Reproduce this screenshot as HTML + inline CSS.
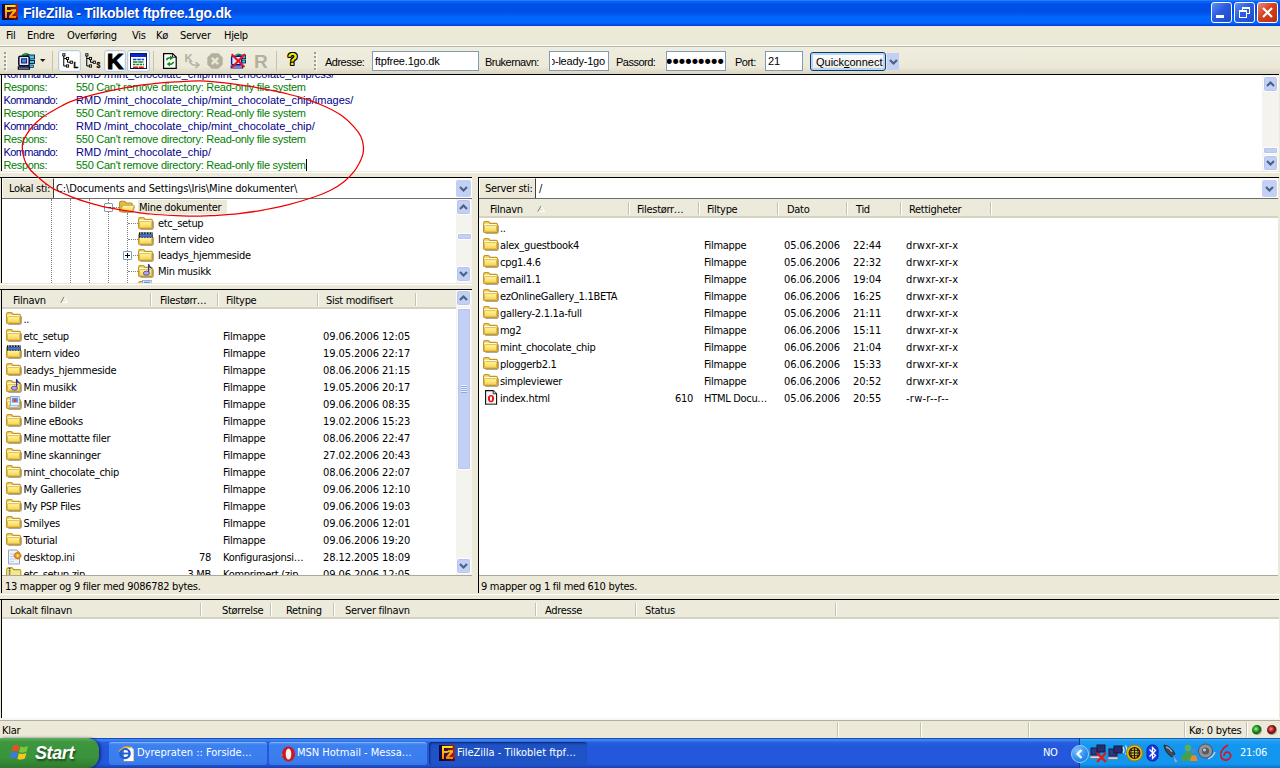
<!DOCTYPE html><html><head><meta charset='utf-8'><title>FileZilla - Tilkoblet ftpfree.1go.dk</title><style>
*{box-sizing:border-box;margin:0;padding:0}
html,body{width:1280px;height:768px;overflow:hidden;background:#ECE9D8}
body{position:relative;font-family:'DejaVu Sans Condensed','DejaVu Sans','Liberation Sans',sans-serif;font-size:11px;letter-spacing:-0.3px;color:#000;line-height:13px}
.a{position:absolute}
.t{position:absolute;white-space:nowrap;height:13px;line-height:13px}
.ms{font-family:'Liberation Sans',sans-serif;letter-spacing:-0.35px}
.w{background:#fff}
.bk{background:#000}
.hd{background:#EBEADB}
.sep{position:absolute;width:1px;background:#C5C2B2;box-shadow:1px 0 0 #fff}
.sb{position:absolute;width:17px;background:#F4F3EE}
.sbb{position:absolute;left:1px;width:15px;height:16px;background:#C3D0F6;border:1px solid #fff;border-radius:3px;box-shadow:0 0 0 1px #B7C5EE inset}
.inp{position:absolute;background:#fff;border:1px solid #7F9DB9;height:20px}
.ic{position:absolute;width:16px;height:16px}
</style></head><body>
<svg width="0" height="0" style="position:absolute">
<defs>
<linearGradient id="gf" x1="0" y1="0" x2="0" y2="1"><stop offset="0" stop-color="#FFF89C"/><stop offset="1" stop-color="#F6D052"/></linearGradient>
<symbol id="fold" viewBox="0 0 16 16">
<path d="M2.4 13.3 H14 Q15.3 13.3 15.3 12 V5.4" fill="none" stroke="#6C6850" stroke-width="1" opacity=".7"/>
<path d="M0.6 3.4 Q0.6 1.6 2.2 1.6 L5 1.6 Q6.3 1.6 6.9 3.4 L13.2 3.4 Q14.4 3.5 14.4 4.8 L14.4 11.4 Q14.4 12.5 13.2 12.5 L1.8 12.5 Q0.6 12.5 0.6 11.4 Z" fill="#F6DC74" stroke="#C49624" stroke-width="1.15"/>
<path d="M1.4 4 H13.4 V5.6 H1.4 Z" fill="#FFFBE2"/>
<path d="M1.5 6.6 Q1.5 5.6 2.4 5.6 L12.7 5.6 Q13.6 5.6 13.6 6.6 L13.6 11 Q13.6 11.9 12.7 11.9 L2.4 11.9 Q1.5 11.9 1.5 11 Z" fill="url(#gf)" stroke="#D4A838" stroke-width=".7"/>
</symbol>
<symbol id="foldo" viewBox="0 0 16 16">
<path d="M3 12.4 H13.6 L15.6 7" fill="none" stroke="#6C6850" stroke-width="1" opacity=".6"/>
<path d="M0.6 3 Q0.6 1.2 2.2 1.2 L5 1.2 Q6.3 1.2 6.9 3 L12 3 Q13.2 3.1 13.2 4.4 L13.2 10.6 L1.8 11.6 Q0.6 11.6 0.6 10.5 Z" fill="#E4BC4C" stroke="#B88C1E" stroke-width="1.1"/>
<path d="M3.4 5.6 L15.4 5.6 L13.3 11.6 L1.2 11.6 Z" fill="url(#gf)" stroke="#C49624" stroke-width=".9"/>
<path d="M4 6.3 H14.4" stroke="#FFFBE2" stroke-width=".8"/>
</symbol>
<symbol id="vid" viewBox="0 0 16 16">
<use href="#fold"/>
<rect x="1" y="0.3" width="13.6" height="5.4" fill="#101010"/>
<rect x="1.6" y="2.2" width="12.4" height="2.6" fill="#3C78E0"/>
<path d="M2 1.1 H14" stroke="#fff" stroke-width="1" stroke-dasharray="1.4 1.4"/>
<path d="M2 5.9 H14" stroke="#fff" stroke-width=".9" stroke-dasharray="1.4 1.4"/>
</symbol>
<symbol id="mus" viewBox="0 0 16 16">
<use href="#fold"/>
<path d="M10.6 0 L10.6 8.6" stroke="#30308C" stroke-width="1.3"/><path d="M10.6 0 L14 4.4 L13.2 5 L10.6 2.2 Z" fill="#30308C"/>
<ellipse cx="8.4" cy="9.2" rx="3" ry="2" fill="#A8A8F0" stroke="#4848B0" stroke-width=".9"/>
</symbol>
<symbol id="pic" viewBox="0 0 16 16">
<use href="#fold"/>
<rect x="4.6" y="0.4" width="8.6" height="9.6" fill="#F4F8FF" stroke="#8098C8" stroke-width=".8"/>
<rect x="5.8" y="1.6" width="6.2" height="5" fill="#58A0E8"/><circle cx="9" cy="4.4" r="1.6" fill="#E84030"/>
<rect x="3.6" y="9.2" width="8" height="2.4" fill="#D8E4F8" stroke="#8098C8" stroke-width=".5"/>
</symbol>
<symbol id="ini" viewBox="0 0 16 16">
<path d="M2.5 1 H11 L13.5 3.5 V15 H2.5 Z" fill="#EEF2FC" stroke="#9098B8" stroke-width=".9"/>
<path d="M4 5 H10 M4 7.5 H9 M4 10 H10 M4 12.5 H8" stroke="#B8C8E8" stroke-width=".9"/>
<circle cx="11.6" cy="6.6" r="3.1" fill="#F0A020" stroke="#B86800" stroke-width=".9"/><circle cx="11.6" cy="6.6" r="1.1" fill="#FFF0C0"/>
<path d="M11.6 2.6 V4 M11.6 9.2 V10.6 M7.6 6.6 H9 M14.2 6.6 H15.6" stroke="#D88810" stroke-width="1.6"/>
</symbol>
<symbol id="zip" viewBox="0 0 16 16">
<path d="M0.6 4.2 Q0.6 2.1 2.4 1.6 L5.6 1.6 Q6.8 1.8 7.4 3.6 L13.6 3.6 Q14.8 3.8 14.8 5 L14.8 14.5 L0.6 14.5 Z" fill="#F6E888" stroke="#B0A020" stroke-width="1.1"/>
<path d="M3.6 2 V14" stroke="#303030" stroke-width="1.6" stroke-dasharray="1.2 1"/>
</symbol>
<symbol id="html" viewBox="0 0 16 16">
<path d="M2.6 0.6 H10.2 L13.6 3.8 V14.2 H2.6 Z" fill="#F6F6F6" stroke="#101010" stroke-width="1.1"/>
<path d="M10.2 0.6 V3.8 H13.6" fill="#C8C8C8" stroke="#101010" stroke-width=".8"/>
<ellipse cx="8" cy="8.6" rx="3.1" ry="3.6" fill="#E81010"/><ellipse cx="8" cy="8.6" rx="1.1" ry="2.4" fill="#fff"/>
<path d="M3.6 14 H12.6" stroke="#909090" stroke-width=".8"/>
</symbol>
<symbol id="arrd" viewBox="0 0 15 16"><path d="M4 6 L7.5 9.5 L11 6" fill="none" stroke="#4D6185" stroke-width="2.2"/></symbol>
<symbol id="arru" viewBox="0 0 15 16"><path d="M4 10 L7.5 6.5 L11 10" fill="none" stroke="#4D6185" stroke-width="2.2"/></symbol>
</defs></svg>
<div class='a' style='left:0;top:0;width:1280px;height:26px;background:linear-gradient(#4A8CFF 0,#0A64FA 1px,#0062F8 2.5px,#0050E8 4px,#004EE6 12px,#005CF4 15px,#0066FF 17px,#0066FF 23px,#0050E8 24.5px,#0038D0 26px)'></div>
<svg class='a' style='left:2px;top:4px' width='16' height='16' viewBox='0 0 16 16'><defs><linearGradient id='fzb' x1='0' y1='0' x2='1' y2='0'><stop offset='0' stop-color='#10004A'/><stop offset='.45' stop-color='#3A1050'/><stop offset='1' stop-color='#B02418'/></linearGradient><linearGradient id='fzy' x1='0' y1='0' x2='0' y2='1'><stop offset='0' stop-color='#FFF000'/><stop offset='1' stop-color='#FF7A00'/></linearGradient></defs>
<rect width='16' height='16' fill='url(#fzb)'/><rect x='0' y='13' width='16' height='3' fill='#200008' opacity='.55'/>
<path d='M3 1 H13.6 V3 H5 V6 H9 L9 5.3 H14 V7.3 L10 12 H14 V14 H7 V12 L11 7.3 H8.6 V8 H5 V14 H3 Z' fill='url(#fzy)'/></svg>
<div class='t' style="left:23px;top:5px;height:18px;line-height:18px;font:bold 14px 'Liberation Sans',sans-serif;letter-spacing:-0.28px;color:#fff;text-shadow:1px 1px 0 #0A30A0">FileZilla - Tilkoblet ftpfree.1go.dk</div>
<div class='a' style='left:1211px;top:2px;width:21px;height:21px;border:1px solid #fff;border-radius:3px;background:linear-gradient(135deg,#5F8FF5,#2A5CE0 45%,#1F4AC8)'><div class='a' style='left:4px;top:12px;width:8px;height:3px;background:#fff'></div></div>
<div class='a' style='left:1234px;top:2px;width:21px;height:21px;border:1px solid #fff;border-radius:3px;background:linear-gradient(135deg,#5F8FF5,#2A5CE0 45%,#1F4AC8)'><div class='a' style='left:7px;top:4px;width:8px;height:7px;border:1px solid #fff;border-top-width:2px'></div><div class='a' style='left:4px;top:7px;width:8px;height:8px;border:1px solid #fff;border-top-width:2px;background:#2A5CE0'></div></div>
<div class='a' style='left:1257px;top:2px;width:21px;height:21px;border:1px solid #fff;border-radius:3px;background:linear-gradient(135deg,#E9897A,#D4401F 45%,#B8300F)'><svg class='a' style='left:0;top:0' width='19' height='19'><path d='M5 5 L14 14 M14 5 L5 14' stroke='#fff' stroke-width='2.2'/></svg></div>
<div class='a' style='left:0;top:26px;width:1280px;height:19px;background:#ECE9D8'></div>
<div class='t' style='left:6px;top:29px'>Fil</div>
<div class='t' style='left:27px;top:29px'>Endre</div>
<div class='t' style='left:67px;top:29px'>Overføring</div>
<div class='t' style='left:132px;top:29px'>Vis</div>
<div class='t' style='left:156px;top:29px'>Kø</div>
<div class='t' style='left:180px;top:29px'>Server</div>
<div class='t' style='left:224px;top:29px'>Hjelp</div>
<div class='a' style='left:0;top:45px;width:1280px;height:1px;background:#fff'></div>
<div class='a' style='left:0;top:46px;width:1280px;height:1px;background:#B8B5A2'></div>
<div class='a' style='left:0;top:47px;width:1280px;height:27px;background:linear-gradient(#EFEDDE 0,#ECE9D8 20px,#D8D4C0 27px)'></div>
<div class='a' style='left:4px;top:52px;width:2px;height:18px;background:repeating-linear-gradient(#A09C88 0,#A09C88 2px,transparent 2px,transparent 4px);box-shadow:1px 1px 0 rgba(255,255,255,.7)'></div>
<div class='a' style='left:314px;top:52px;width:2px;height:18px;background:repeating-linear-gradient(#A09C88 0,#A09C88 2px,transparent 2px,transparent 4px);box-shadow:1px 1px 0 rgba(255,255,255,.7)'></div>
<div class='a' style='left:52px;top:51px;width:1px;height:20px;background:#C5C2B2'></div>
<div class='a' style='left:153px;top:51px;width:1px;height:20px;background:#C5C2B2'></div>
<div class='a' style='left:276px;top:51px;width:1px;height:20px;background:#C5C2B2'></div>
<svg class='a' style='left:17px;top:52px' width='30' height='18' viewBox='0 0 30 18'>
<path d='M5 3 Q8 0 12.5 2.5 L9.5 4.5 Z' fill='#30B030' stroke='#108010' stroke-width='.8'/>
<rect x='10' y='3' width='7.5' height='4' fill='#30D0E8' stroke='#101040' stroke-width='.9'/><rect x='11.5' y='8.5' width='6' height='3' fill='#30D0E8' stroke='#101040' stroke-width='.9'/><rect x='11.5' y='13' width='5' height='2.4' fill='#30D0E8' stroke='#101040' stroke-width='.7'/>
<rect x='1.8' y='4.2' width='10.4' height='9.6' rx='1.6' fill='#E0E8F8' stroke='#080830' stroke-width='1.5'/><rect x='4.6' y='6.8' width='5' height='4.2' fill='#4888E0' stroke='#101050' stroke-width='.9'/>
<path d='M1.4 15 H12.4 V17.2 H1.4 Z' fill='#F0F0F8' stroke='#080820' stroke-width='1.3'/><path d='M3 16.1 H11' stroke='#2040A0' stroke-width='.9' stroke-dasharray='1.2 1'/>
<path d='M23 7 H28.4 L25.7 10 Z' fill='#181818'/></svg>
<div class='a' style='left:58px;top:50px;width:23px;height:22px;background:#fff;border:1px solid #B8CCE0;border-radius:3px;box-shadow:0 0 0 1px #F0F4FA inset'></div>
<div class='a' style='left:104px;top:50px;width:22px;height:22px;background:#fff;border:1px solid #B8CCE0;border-radius:3px;box-shadow:0 0 0 1px #F0F4FA inset'></div>
<div class='a' style='left:127px;top:50px;width:23px;height:22px;background:#fff;border:1px solid #B8CCE0;border-radius:3px;box-shadow:0 0 0 1px #F0F4FA inset'></div>
<svg class='a' style='left:62px;top:53px' width='18' height='17' viewBox='0 0 18 17'><path d='M1.75 3 V13 H4.2 M1.75 5.5 H4.2 M5.5 6.8 V9.25 H8' fill='none' stroke='#000' stroke-width='1'/>
<rect x='.75' y='.75' width='2.2' height='2.2' fill='#fff' stroke='#000' stroke-width='.9'/><rect x='4.4' y='4.4' width='2.2' height='2.2' fill='#fff' stroke='#000' stroke-width='.9'/><rect x='8.2' y='8.1' width='2.2' height='2.2' fill='#fff' stroke='#000' stroke-width='.9'/><rect x='4.4' y='11.9' width='2.2' height='2.2' fill='#fff' stroke='#000' stroke-width='.9'/>
<text x='11.5' y='15.3' font-family="Liberation Sans,sans-serif" font-weight='bold' font-size='9' fill='#000' stroke='#000' stroke-width='.5' textLength='4.4' lengthAdjust='spacingAndGlyphs'>L</text></svg>
<svg class='a' style='left:84.5px;top:53px' width='18' height='17' viewBox='0 0 18 17'><path d='M1.75 3 V13 H4.2 M1.75 5.5 H4.2 M5.5 6.8 V9.25 H8' fill='none' stroke='#000' stroke-width='1'/>
<rect x='.75' y='.75' width='2.2' height='2.2' fill='#fff' stroke='#000' stroke-width='.9'/><rect x='4.4' y='4.4' width='2.2' height='2.2' fill='#fff' stroke='#000' stroke-width='.9'/><rect x='8.2' y='8.1' width='2.2' height='2.2' fill='#fff' stroke='#000' stroke-width='.9'/><rect x='4.4' y='11.9' width='2.2' height='2.2' fill='#fff' stroke='#000' stroke-width='.9'/>
<text x='11.5' y='15.3' font-family="Liberation Sans,sans-serif" font-weight='bold' font-size='9' fill='#000' stroke='#000' stroke-width='.5' textLength='3.6' lengthAdjust='spacingAndGlyphs'>S</text></svg>
<div class='t' style="left:107px;top:49px;height:24px;line-height:24px;font:bold 22.5px 'Liberation Sans',sans-serif;letter-spacing:0;-webkit-text-stroke:1.1px #000">K</div>
<svg class='a' style='left:130px;top:53px' width='17' height='16' viewBox='0 0 17 16'><rect x='.5' y='.5' width='16' height='15' fill='#fff' stroke='#181848'/><rect x='1' y='1' width='15' height='3' fill='#0828D0'/>
<path d='M3 6.4 H14' stroke='#1838E8' stroke-width='1.5' stroke-dasharray='3.5 .8'/><path d='M3 9 H14' stroke='#088818' stroke-width='1.5' stroke-dasharray='4.5 .8'/><path d='M3 11.6 H14' stroke='#088818' stroke-width='1.5' stroke-dasharray='2.5 .8'/><path d='M3 14.2 H14' stroke='#E81818' stroke-width='1.5' stroke-dasharray='5 .8'/></svg>
<svg class='a' style='left:163px;top:53px' width='14' height='16' viewBox='0 0 14 16'><path d='M.6 .6 H9.6 L13.2 4 V15.4 H.6 Z' fill='#fff' stroke='#000' stroke-width='1.2'/><path d='M9.4 .8 V4.2 H13' fill='none' stroke='#000' stroke-width='.9'/>
<path d='M3.6 7.2 Q3.8 4.6 7.4 4.8' fill='none' stroke='#109010' stroke-width='1.5'/><path d='M7 2.6 L10.4 4.9 L7 7.2 Z' fill='#109010'/><path d='M10.4 8.8 Q10.2 11.4 6.6 11.2' fill='none' stroke='#109010' stroke-width='1.5'/><path d='M7 8.8 L3.6 11.1 L7 13.4 Z' fill='#109010'/></svg>
<div class='t' style="left:184.5px;top:52px;height:11px;line-height:11px;font:bold 11.5px 'Liberation Sans',sans-serif;color:#B4B09E;letter-spacing:0">K</div>
<svg class='a' style='left:186px;top:58px' width='16' height='12'><path d='M3.5 3 Q5 8 12 7 M9.6 4 L13 7 L9.6 10' fill='none' stroke='#B4B09E' stroke-width='1.5'/></svg>
<svg class='a' style='left:207px;top:53px' width='16' height='16'><path d='M4.6 .3 H11.4 L15.7 4.6 V11.4 L11.4 15.7 H4.6 L.3 11.4 V4.6 Z' fill='#B4B09E'/><path d='M4.8 4.8 L11.2 11.2 M11.2 4.8 L4.8 11.2' stroke='#E8E5D4' stroke-width='2.6'/></svg>
<svg class='a' style='left:230px;top:53px' width='17' height='16' viewBox='0 0 17 16'><path d='M5 2 Q8 -.5 11 1.5 L9 3.5 Z' fill='#30B030'/><rect x='8.6' y='2' width='7' height='3.6' fill='#30D0E8' stroke='#101040' stroke-width='.8'/><rect x='9.6' y='7' width='6' height='3' fill='#30D0E8' stroke='#101040' stroke-width='.8'/><rect x='1.6' y='3.2' width='10' height='8.6' rx='1.4' fill='#D8E4F8' stroke='#0818A0' stroke-width='1.4'/><path d='M1.2 13 H12.6 V15 H1.2 Z' fill='#E8E8F0' stroke='#0818A0' stroke-width='1.2'/>
<path d='M1.6 1.2 L14.4 14 M14.8 1.2 L2 14.4' stroke='#F01010' stroke-width='2'/></svg>
<div class='t' style="left:254px;top:51px;height:20px;line-height:20px;font:bold 19px 'Liberation Sans',sans-serif;color:#B4B09E;letter-spacing:0">R</div>
<div class='t' style="left:287.5px;top:50px;height:20px;line-height:20px;font:bold 16.5px 'Liberation Sans',sans-serif;color:#F8EC00;letter-spacing:0;text-shadow:1px 0 0 #000,-1px 0 0 #000,0 1px 0 #000,0 -1px 0 #000,1px 1px 0 #000,-1px -1px 0 #000,1px -1px 0 #000,-1px 1px 0 #000">?</div>
<div class='t ms' style='left:325px;top:56px;letter-spacing:-0.5px'>Adresse:</div>
<div class='t ms' style='left:485px;top:56px;letter-spacing:-0.5px'>Brukernavn:</div>
<div class='t ms' style='left:616px;top:56px;letter-spacing:-0.5px'>Passord:</div>
<div class='t ms' style='left:735px;top:56px;letter-spacing:-0.5px'>Port:</div>
<div class='inp' style='left:372px;top:51px;width:107px;overflow:hidden'><div class='t ms' style='left:2px;top:3px;letter-spacing:-0.2px'>ftpfree.1go.dk</div></div>
<div class='inp' style='left:549px;top:51px;width:60px;overflow:hidden'><div class='a' style='left:2px;top:0;width:56px;height:18px;overflow:hidden'><div class='t ms' style='left:-3px;top:3px;letter-spacing:-0.2px'>o-leady-1go</div></div></div>
<div class='inp' style='left:666px;top:51px;width:60px;overflow:hidden'><div class='t ms' style='left:2px;top:3px;letter-spacing:-0.2px'></div></div>
<div class='inp' style='left:765px;top:51px;width:38px;overflow:hidden'><div class='t ms' style='left:2px;top:3px;letter-spacing:-0.2px'>21</div></div>
<div class='t' style="left:667px;top:55px;font-family:'DejaVu Sans',sans-serif;letter-spacing:-3.9px;font-size:17.5px;line-height:14px;height:14px;width:58px;overflow:hidden;text-indent:-3px">•••••••••</div>
<div class='a' style='left:810px;top:52px;width:76px;height:19px;border:1px solid #003C74;border-radius:3px;background:linear-gradient(#fff,#ECEBE6 85%,#D6D0C5);box-shadow:0 0 0 2px #BCD4F6 inset'></div>
<div class='t ms' style='left:816px;top:56px;letter-spacing:-0.02px'>Quick<u>c</u>onnect</div>
<div class='a' style='left:887px;top:53px;width:12px;height:17px;background:#C3D0F6'><svg class='a' style='left:-1px;top:1px' width='15' height='16'><use href='#arrd'/></svg></div>
<div class='a bk' style='left:0;top:74px;width:1279px;height:1px'></div>
<div class='a bk' style='left:1px;top:74px;width:1px;height:97px'></div>
<div class='a w' style='left:2px;top:75px;width:1277px;height:96px;overflow:hidden'>
<div class='t ms' style='left:1.5px;top:-7px;color:#00008B;letter-spacing:-0.6px'>Kommando:</div><div class='t ms' style='left:74px;top:-7px;color:#00008B;letter-spacing:0.02px'>RMD /mint_chocolate_chip/mint_chocolate_chip/css/</div>
<div class='t ms' style='left:1.5px;top:6px;color:#008000;letter-spacing:-0.35px'>Respons:</div><div class='t ms' style='left:74px;top:6px;color:#008000;letter-spacing:-0.27px'>550 Can't remove directory: Read-only file system</div>
<div class='t ms' style='left:1.5px;top:19px;color:#00008B;letter-spacing:-0.6px'>Kommando:</div><div class='t ms' style='left:74px;top:19px;color:#00008B;letter-spacing:0.02px'>RMD /mint_chocolate_chip/mint_chocolate_chip/images/</div>
<div class='t ms' style='left:1.5px;top:32px;color:#008000;letter-spacing:-0.35px'>Respons:</div><div class='t ms' style='left:74px;top:32px;color:#008000;letter-spacing:-0.27px'>550 Can't remove directory: Read-only file system</div>
<div class='t ms' style='left:1.5px;top:45px;color:#00008B;letter-spacing:-0.6px'>Kommando:</div><div class='t ms' style='left:74px;top:45px;color:#00008B;letter-spacing:0.02px'>RMD /mint_chocolate_chip/mint_chocolate_chip/</div>
<div class='t ms' style='left:1.5px;top:58px;color:#008000;letter-spacing:-0.35px'>Respons:</div><div class='t ms' style='left:74px;top:58px;color:#008000;letter-spacing:-0.27px'>550 Can't remove directory: Read-only file system</div>
<div class='t ms' style='left:1.5px;top:71px;color:#00008B;letter-spacing:-0.6px'>Kommando:</div><div class='t ms' style='left:74px;top:71px;color:#00008B;letter-spacing:0.02px'>RMD /mint_chocolate_chip/</div>
<div class='t ms' style='left:1.5px;top:84px;color:#008000;letter-spacing:-0.35px'>Respons:</div><div class='t ms' style='left:74px;top:84px;color:#008000;letter-spacing:-0.27px'>550 Can't remove directory: Read-only file system</div>
<div class='a bk' style='left:304px;top:84px;width:1px;height:12px'></div>
</div>
<div class='sb' style='left:1262px;top:75px;height:96px'></div>
<div class='sbb' style='left:1263px;top:76px'><svg class='a' style='left:-1px;top:-1px' width='15' height='16'><use href='#arru'/></svg></div>
<div class='sbb' style='left:1263px;top:155px'><svg class='a' style='left:-1px;top:-1px' width='15' height='16'><use href='#arrd'/></svg></div>
<div class='a' style='left:1263px;top:147px;width:15px;height:7px;background:#C3D0F6;border:1px solid #fff;border-radius:2px;box-shadow:0 0 0 1px #B7C5EE inset'></div>
<div class='a w' style='left:0;top:172px;width:1280px;height:1px'></div>
<div class='a w' style='left:0;top:284px;width:472px;height:1px'></div>
<div class='a bk' style='left:0;top:177px;width:472px;height:1px'></div>
<div class='a bk' style='left:1px;top:177px;width:1px;height:106px'></div>
<div class='a' style='left:2px;top:178px;width:52px;height:21px;background:#ECE9D8;border-right:1px solid #404040;border-bottom:1px solid #404040;border-top:1px solid #fff;border-left:1px solid #fff'></div>
<div class='t' style='left:9px;top:182px'>Lokal sti:</div>
<div class='a w' style='left:54px;top:178px;width:418px;height:20px'></div>
<div class='t' style='left:56px;top:182px;letter-spacing:-0.13px'>C:\Documents and Settings\Iris\Mine dokumenter\</div>
<div class='a' style='left:456px;top:180px;width:15px;height:17px;background:#C3D0F6;border-radius:2px'><svg class='a' style='left:0;top:1px' width='15' height='16'><use href='#arrd'/></svg></div>
<div class='a' style='left:2px;top:198px;width:470px;height:1px;background:#6E6E6E'></div>
<div class='a w' style='left:2px;top:199px;width:454px;height:84px;overflow:hidden'>
<div class='a' style='left:49px;top:0;width:0;height:84px;border-left:1px dotted #808080'></div>
<div class='a' style='left:68px;top:0;width:0;height:84px;border-left:1px dotted #808080'></div>
<div class='a' style='left:87px;top:0;width:0;height:84px;border-left:1px dotted #808080'></div>
<div class='a' style='left:106px;top:0;width:0;height:84px;border-left:1px dotted #808080'></div>
<div class='a' style='left:125px;top:14px;width:0;height:70px;border-left:1px dotted #808080'></div>
<div class='a' style='left:111px;top:8px;width:6px;height:0;border-top:1px dotted #808080'></div>
<div class='a' style='left:126px;top:24px;width:10px;height:0;border-top:1px dotted #808080'></div>
<div class='a' style='left:126px;top:40px;width:10px;height:0;border-top:1px dotted #808080'></div>
<div class='a' style='left:126px;top:56px;width:10px;height:0;border-top:1px dotted #808080'></div>
<div class='a' style='left:126px;top:72px;width:10px;height:0;border-top:1px dotted #808080'></div>
<div class='a w' style='left:102px;top:4px;width:9px;height:9px;border:1px solid #7B9EBD;border-radius:1px'><div class='a bk' style='left:1px;top:3px;width:5px;height:1px'></div></div>
<div class='a w' style='left:121px;top:52px;width:9px;height:9px;border:1px solid #7B9EBD;border-radius:1px'><div class='a bk' style='left:1px;top:3px;width:5px;height:1px'></div><div class='a bk' style='left:3px;top:1px;width:1px;height:5px'></div></div>
<svg class='ic' style='left:116.5px;top:1px'><use href='#foldo'/></svg>
<div class='a' style='left:136px;top:1px;width:89px;height:14px;background:#ECE9D8'></div>
<div class='t' style='left:137px;top:2px'>Mine dokumenter</div>
<svg class='ic' style='left:136px;top:17px'><use href='#fold'/></svg>
<div class='t' style='left:156px;top:18px'>etc_setup</div>
<svg class='ic' style='left:136px;top:33px'><use href='#vid'/></svg>
<div class='t' style='left:156px;top:34px'>Intern video</div>
<svg class='ic' style='left:136px;top:49px'><use href='#fold'/></svg>
<div class='t' style='left:156px;top:50px'>leadys_hjemmeside</div>
<svg class='ic' style='left:136px;top:65px'><use href='#mus'/></svg>
<div class='t' style='left:156px;top:66px'>Min musikk</div>
<svg class='ic' style='left:136px;top:81px'><use href='#pic'/></svg>
<div class='t' style='left:156px;top:82px'>Mine bilder</div>
</div>
<div class='sb' style='left:456px;top:199px;height:84px;width:16px'></div>
<div class='sbb' style='left:456px;top:199px'><svg class='a' style='left:-1px;top:-1px' width='15' height='16'><use href='#arru'/></svg></div>
<div class='sbb' style='left:456px;top:266px'><svg class='a' style='left:-1px;top:-1px' width='15' height='16'><use href='#arrd'/></svg></div>
<div class='a' style='left:457px;top:233px;width:15px;height:7px;background:#C3D0F6;border:1px solid #fff;border-radius:2px;box-shadow:0 0 0 1px #B7C5EE inset'></div>
<div class='a bk' style='left:0;top:289px;width:472px;height:1px'></div>
<div class='a bk' style='left:1px;top:289px;width:1px;height:304px'></div>
<div class='a hd' style='left:2px;top:290px;width:454px;height:19px;border-bottom:2px solid #D6D2C2'></div>
<div class='t' style='left:13px;top:294px'>Filnavn</div>
<div class='t' style='left:160px;top:294px'>Filestørr…</div>
<div class='t' style='left:226px;top:294px'>Filtype</div>
<div class='t' style='left:326px;top:294px'>Sist modifisert</div>
<svg class='a' style='left:59.5px;top:296px' width='9' height='8'><path d='M4.2 .6 L7.6 6.6 H1' fill='none' stroke='#fff' stroke-width='1'/><path d='M.8 6.8 L4 .8' fill='none' stroke='#808078' stroke-width='1'/></svg>
<div class='sep' style='left:150px;top:293px;height:13px'></div>
<div class='sep' style='left:217px;top:293px;height:13px'></div>
<div class='sep' style='left:317px;top:293px;height:13px'></div>
<div class='sep' style='left:415px;top:293px;height:13px'></div>
<div class='a w' style='left:2px;top:309px;width:454px;height:266px;overflow:hidden'>
<svg class='ic' style='left:4px;top:2px'><use href='#fold'/></svg>
<div class='t' style='left:21.5px;top:4px'>..</div>
<svg class='ic' style='left:4px;top:19px'><use href='#fold'/></svg>
<div class='t' style='left:21.5px;top:21px'>etc_setup</div>
<div class='t' style='left:221px;top:21px'>Filmappe</div>
<div class='t' style='left:321px;top:21px;letter-spacing:-0.07px'>09.06.2006 12:05</div>
<svg class='ic' style='left:4px;top:36px'><use href='#vid'/></svg>
<div class='t' style='left:21.5px;top:38px'>Intern video</div>
<div class='t' style='left:221px;top:38px'>Filmappe</div>
<div class='t' style='left:321px;top:38px;letter-spacing:-0.07px'>19.05.2006 22:17</div>
<svg class='ic' style='left:4px;top:53px'><use href='#fold'/></svg>
<div class='t' style='left:21.5px;top:55px'>leadys_hjemmeside</div>
<div class='t' style='left:221px;top:55px'>Filmappe</div>
<div class='t' style='left:321px;top:55px;letter-spacing:-0.07px'>08.06.2006 21:15</div>
<svg class='ic' style='left:4px;top:70px'><use href='#mus'/></svg>
<div class='t' style='left:21.5px;top:72px'>Min musikk</div>
<div class='t' style='left:221px;top:72px'>Filmappe</div>
<div class='t' style='left:321px;top:72px;letter-spacing:-0.07px'>19.05.2006 20:17</div>
<svg class='ic' style='left:4px;top:87px'><use href='#pic'/></svg>
<div class='t' style='left:21.5px;top:89px'>Mine bilder</div>
<div class='t' style='left:221px;top:89px'>Filmappe</div>
<div class='t' style='left:321px;top:89px;letter-spacing:-0.07px'>09.06.2006 08:35</div>
<svg class='ic' style='left:4px;top:104px'><use href='#fold'/></svg>
<div class='t' style='left:21.5px;top:106px'>Mine eBooks</div>
<div class='t' style='left:221px;top:106px'>Filmappe</div>
<div class='t' style='left:321px;top:106px;letter-spacing:-0.07px'>19.02.2006 15:23</div>
<svg class='ic' style='left:4px;top:121px'><use href='#fold'/></svg>
<div class='t' style='left:21.5px;top:123px'>Mine mottatte filer</div>
<div class='t' style='left:221px;top:123px'>Filmappe</div>
<div class='t' style='left:321px;top:123px;letter-spacing:-0.07px'>08.06.2006 22:47</div>
<svg class='ic' style='left:4px;top:138px'><use href='#fold'/></svg>
<div class='t' style='left:21.5px;top:140px'>Mine skanninger</div>
<div class='t' style='left:221px;top:140px'>Filmappe</div>
<div class='t' style='left:321px;top:140px;letter-spacing:-0.07px'>27.02.2006 20:43</div>
<svg class='ic' style='left:4px;top:155px'><use href='#fold'/></svg>
<div class='t' style='left:21.5px;top:157px'>mint_chocolate_chip</div>
<div class='t' style='left:221px;top:157px'>Filmappe</div>
<div class='t' style='left:321px;top:157px;letter-spacing:-0.07px'>08.06.2006 22:07</div>
<svg class='ic' style='left:4px;top:172px'><use href='#fold'/></svg>
<div class='t' style='left:21.5px;top:174px'>My Galleries</div>
<div class='t' style='left:221px;top:174px'>Filmappe</div>
<div class='t' style='left:321px;top:174px;letter-spacing:-0.07px'>09.06.2006 12:10</div>
<svg class='ic' style='left:4px;top:189px'><use href='#fold'/></svg>
<div class='t' style='left:21.5px;top:191px'>My PSP Files</div>
<div class='t' style='left:221px;top:191px'>Filmappe</div>
<div class='t' style='left:321px;top:191px;letter-spacing:-0.07px'>09.06.2006 19:03</div>
<svg class='ic' style='left:4px;top:206px'><use href='#fold'/></svg>
<div class='t' style='left:21.5px;top:208px'>Smilyes</div>
<div class='t' style='left:221px;top:208px'>Filmappe</div>
<div class='t' style='left:321px;top:208px;letter-spacing:-0.07px'>09.06.2006 12:01</div>
<svg class='ic' style='left:4px;top:223px'><use href='#fold'/></svg>
<div class='t' style='left:21.5px;top:225px'>Toturial</div>
<div class='t' style='left:221px;top:225px'>Filmappe</div>
<div class='t' style='left:321px;top:225px;letter-spacing:-0.07px'>09.06.2006 19:20</div>
<svg class='ic' style='left:4px;top:240px'><use href='#ini'/></svg>
<div class='t' style='left:21.5px;top:242px'>desktop.ini</div>
<div class='t' style='left:150px;width:59px;text-align:right;top:242px'>78</div>
<div class='t' style='left:221px;top:242px'>Konfigurasjonsi…</div>
<div class='t' style='left:321px;top:242px;letter-spacing:-0.07px'>28.12.2005 18:09</div>
<svg class='ic' style='left:4px;top:257px'><use href='#zip'/></svg>
<div class='t' style='left:21.5px;top:259px'>etc_setup.zip</div>
<div class='t' style='left:150px;width:59px;text-align:right;top:259px'>3 MB</div>
<div class='t' style='left:221px;top:259px'>Komprimert (zip…</div>
<div class='t' style='left:321px;top:259px;letter-spacing:-0.07px'>09.06.2006 12:05</div>
</div>
<div class='sb' style='left:456px;top:290px;height:285px;width:16px'></div>
<div class='sbb' style='left:456px;top:290px'><svg class='a' style='left:-1px;top:-1px' width='15' height='16'><use href='#arru'/></svg></div>
<div class='sbb' style='left:456px;top:558px'><svg class='a' style='left:-1px;top:-1px' width='15' height='16'><use href='#arrd'/></svg></div>
<div class='a' style='left:457px;top:308px;width:14px;height:162px;background:#C3D0F6;border:1px solid #fff;border-radius:2px;box-shadow:0 0 0 1px #B7C5EE inset'></div>
<div class='a' style='left:461px;top:385px;width:6px;height:8px;background:repeating-linear-gradient(#EEF4FE 0,#EEF4FE 1px,#8CA4E0 1px,#8CA4E0 2px)'></div>
<div class='a' style='left:2px;top:575px;width:470px;height:18px;border-top:1px solid #ACA899'></div>
<div class='t' style='left:5px;top:580px'>13 mapper og 9 filer med 9086782 bytes.</div>
<div class='a bk' style='left:478px;top:177px;width:801px;height:1px'></div>
<div class='a bk' style='left:478px;top:177px;width:1px;height:416px'></div>
<div class='a' style='left:479px;top:178px;width:57px;height:21px;background:#ECE9D8;border-right:1px solid #404040;border-bottom:1px solid #404040;border-top:1px solid #fff;border-left:1px solid #fff'></div>
<div class='t' style='left:485px;top:182px'>Server sti:</div>
<div class='a w' style='left:536px;top:178px;width:742px;height:20px'></div>
<div class='t' style='left:539px;top:182px'>/</div>
<div class='a' style='left:1262px;top:180px;width:15px;height:17px;background:#C3D0F6;border-radius:2px'><svg class='a' style='left:0;top:1px' width='15' height='16'><use href='#arrd'/></svg></div>
<div class='a' style='left:479px;top:198px;width:799px;height:1px;background:#6E6E6E'></div>
<div class='a hd' style='left:479px;top:199px;width:799px;height:19px;border-bottom:2px solid #D6D2C2'></div>
<div class='t' style='left:490px;top:203px'>Filnavn</div>
<div class='t' style='left:637px;top:203px'>Filestørr…</div>
<div class='t' style='left:707px;top:203px'>Filtype</div>
<div class='t' style='left:787px;top:203px'>Dato</div>
<div class='t' style='left:856px;top:203px'>Tid</div>
<div class='t' style='left:909px;top:203px'>Rettigheter</div>
<svg class='a' style='left:536.5px;top:205px' width='9' height='8'><path d='M4.2 .6 L7.6 6.6 H1' fill='none' stroke='#fff' stroke-width='1'/><path d='M.8 6.8 L4 .8' fill='none' stroke='#808078' stroke-width='1'/></svg>
<div class='sep' style='left:628px;top:202px;height:13px'></div>
<div class='sep' style='left:698px;top:202px;height:13px'></div>
<div class='sep' style='left:777px;top:202px;height:13px'></div>
<div class='sep' style='left:846px;top:202px;height:13px'></div>
<div class='sep' style='left:900px;top:202px;height:13px'></div>
<div class='sep' style='left:990px;top:202px;height:13px'></div>
<div class='a w' style='left:479px;top:218px;width:799px;height:357px;overflow:hidden'>
<svg class='ic' style='left:4px;top:2px'><use href='#fold'/></svg>
<div class='t' style='left:21px;top:4px'>..</div>
<svg class='ic' style='left:4px;top:19px'><use href='#fold'/></svg>
<div class='t' style='left:21px;top:21px'>alex_guestbook4</div>
<div class='t' style='left:225px;top:21px'>Filmappe</div>
<div class='t' style='left:305px;top:21px;letter-spacing:-0.07px'>05.06.2006</div>
<div class='t' style='left:374px;top:21px;letter-spacing:-0.07px'>22:44</div>
<div class='t' style='left:427px;top:21px;letter-spacing:0.25px'>drwxr-xr-x</div>
<svg class='ic' style='left:4px;top:36px'><use href='#fold'/></svg>
<div class='t' style='left:21px;top:38px'>cpg1.4.6</div>
<div class='t' style='left:225px;top:38px'>Filmappe</div>
<div class='t' style='left:305px;top:38px;letter-spacing:-0.07px'>05.06.2006</div>
<div class='t' style='left:374px;top:38px;letter-spacing:-0.07px'>22:32</div>
<div class='t' style='left:427px;top:38px;letter-spacing:0.25px'>drwxr-xr-x</div>
<svg class='ic' style='left:4px;top:53px'><use href='#fold'/></svg>
<div class='t' style='left:21px;top:55px'>email1.1</div>
<div class='t' style='left:225px;top:55px'>Filmappe</div>
<div class='t' style='left:305px;top:55px;letter-spacing:-0.07px'>06.06.2006</div>
<div class='t' style='left:374px;top:55px;letter-spacing:-0.07px'>19:04</div>
<div class='t' style='left:427px;top:55px;letter-spacing:0.25px'>drwxr-xr-x</div>
<svg class='ic' style='left:4px;top:70px'><use href='#fold'/></svg>
<div class='t' style='left:21px;top:72px'>ezOnlineGallery_1.1BETA</div>
<div class='t' style='left:225px;top:72px'>Filmappe</div>
<div class='t' style='left:305px;top:72px;letter-spacing:-0.07px'>06.06.2006</div>
<div class='t' style='left:374px;top:72px;letter-spacing:-0.07px'>16:25</div>
<div class='t' style='left:427px;top:72px;letter-spacing:0.25px'>drwxr-xr-x</div>
<svg class='ic' style='left:4px;top:87px'><use href='#fold'/></svg>
<div class='t' style='left:21px;top:89px'>gallery-2.1.1a-full</div>
<div class='t' style='left:225px;top:89px'>Filmappe</div>
<div class='t' style='left:305px;top:89px;letter-spacing:-0.07px'>05.06.2006</div>
<div class='t' style='left:374px;top:89px;letter-spacing:-0.07px'>21:11</div>
<div class='t' style='left:427px;top:89px;letter-spacing:0.25px'>drwxr-xr-x</div>
<svg class='ic' style='left:4px;top:104px'><use href='#fold'/></svg>
<div class='t' style='left:21px;top:106px'>mg2</div>
<div class='t' style='left:225px;top:106px'>Filmappe</div>
<div class='t' style='left:305px;top:106px;letter-spacing:-0.07px'>06.06.2006</div>
<div class='t' style='left:374px;top:106px;letter-spacing:-0.07px'>15:11</div>
<div class='t' style='left:427px;top:106px;letter-spacing:0.25px'>drwxr-xr-x</div>
<svg class='ic' style='left:4px;top:121px'><use href='#fold'/></svg>
<div class='t' style='left:21px;top:123px'>mint_chocolate_chip</div>
<div class='t' style='left:225px;top:123px'>Filmappe</div>
<div class='t' style='left:305px;top:123px;letter-spacing:-0.07px'>06.06.2006</div>
<div class='t' style='left:374px;top:123px;letter-spacing:-0.07px'>21:04</div>
<div class='t' style='left:427px;top:123px;letter-spacing:0.25px'>drwxr-xr-x</div>
<svg class='ic' style='left:4px;top:138px'><use href='#fold'/></svg>
<div class='t' style='left:21px;top:140px'>ploggerb2.1</div>
<div class='t' style='left:225px;top:140px'>Filmappe</div>
<div class='t' style='left:305px;top:140px;letter-spacing:-0.07px'>06.06.2006</div>
<div class='t' style='left:374px;top:140px;letter-spacing:-0.07px'>15:33</div>
<div class='t' style='left:427px;top:140px;letter-spacing:0.25px'>drwxr-xr-x</div>
<svg class='ic' style='left:4px;top:155px'><use href='#fold'/></svg>
<div class='t' style='left:21px;top:157px'>simpleviewer</div>
<div class='t' style='left:225px;top:157px'>Filmappe</div>
<div class='t' style='left:305px;top:157px;letter-spacing:-0.07px'>06.06.2006</div>
<div class='t' style='left:374px;top:157px;letter-spacing:-0.07px'>20:52</div>
<div class='t' style='left:427px;top:157px;letter-spacing:0.25px'>drwxr-xr-x</div>
<svg class='ic' style='left:4px;top:172px'><use href='#html'/></svg>
<div class='t' style='left:21px;top:174px'>index.html</div>
<div class='t' style='left:150px;width:64px;text-align:right;top:174px'>610</div>
<div class='t' style='left:225px;top:174px'>HTML Docu…</div>
<div class='t' style='left:305px;top:174px;letter-spacing:-0.07px'>05.06.2006</div>
<div class='t' style='left:374px;top:174px;letter-spacing:-0.07px'>20:55</div>
<div class='t' style='left:427px;top:174px;letter-spacing:0.25px'>-rw-r--r--</div>
</div>
<div class='a' style='left:479px;top:575px;width:799px;height:18px;border-top:1px solid #ACA899'></div>
<div class='t' style='left:481px;top:580px'>9 mapper og 1 fil med 610 bytes.</div>
<div class='a w' style='left:0;top:594px;width:1280px;height:1px'></div>
<div class='a bk' style='left:0;top:599px;width:1279px;height:1px'></div>
<div class='a bk' style='left:1px;top:599px;width:1px;height:119px'></div>
<div class='a hd' style='left:2px;top:600px;width:1277px;height:19px;border-bottom:2px solid #D6D2C2'></div>
<div class='t' style='left:10px;top:604px'>Lokalt filnavn</div>
<div class='t' style='left:222px;top:604px'>Størrelse</div>
<div class='t' style='left:286px;top:604px'>Retning</div>
<div class='t' style='left:345px;top:604px'>Server filnavn</div>
<div class='t' style='left:545px;top:604px'>Adresse</div>
<div class='t' style='left:645px;top:604px'>Status</div>
<div class='sep' style='left:200px;top:603px;height:13px'></div>
<div class='sep' style='left:270px;top:603px;height:13px'></div>
<div class='sep' style='left:333px;top:603px;height:13px'></div>
<div class='sep' style='left:535px;top:603px;height:13px'></div>
<div class='sep' style='left:635px;top:603px;height:13px'></div>
<div class='sep' style='left:835px;top:603px;height:13px'></div>
<div class='a w' style='left:2px;top:619px;width:1277px;height:99px'></div>
<div class='a' style='left:0;top:718px;width:1280px;height:20px;background:#ECE9D8;border-top:2px solid #F8F6F0'></div>
<div class='a' style='left:0;top:720px;width:1280px;height:1px;background:#B4B0A0'></div>
<div class='t' style='left:2px;top:724px'>Klar</div>
<div class='t' style='left:1189px;top:724px'>Kø: 0 bytes</div>
<div class='sep' style='left:837px;top:722px;height:15px'></div>
<div class='sep' style='left:920px;top:722px;height:15px'></div>
<div class='sep' style='left:1028px;top:722px;height:15px'></div>
<div class='sep' style='left:1184px;top:722px;height:15px'></div>
<div class='sep' style='left:1246px;top:722px;height:15px'></div>
<div class='a' style='left:1252px;top:725px;width:10px;height:10px;border-radius:5px;background:radial-gradient(circle at 40% 40%,#9CF09C 0,#109010 38%,#106010 55%,#909088 62%,#C8C4B4 100%)'></div>
<div class='a' style='left:1267px;top:725px;width:10px;height:10px;border-radius:5px;background:radial-gradient(circle at 40% 40%,#F09C9C 0,#A01010 38%,#701010 55%,#909088 62%,#C8C4B4 100%)'></div>
<div class='a' style='left:0;top:738px;width:1280px;height:30px;background:linear-gradient(#1C48C0 0,#1C48C0 1px,#3C88F0 1px,#3580EC 3px,#2860E0 4px,#2458DC 8px,#2458DC 26px,#1840B0 30px)'></div>
<div class='a' style='left:0;top:738px;width:99px;height:30px;border-radius:0 12px 12px 0;background:linear-gradient(#5EB05E 0,#3E963E 4px,#3A923A 20px,#2E7A2E 30px);box-shadow:2px 0 3px rgba(0,0,60,.5)'></div>
<svg class='a' style='left:10px;top:743px' width='21' height='19' viewBox='0 0 22 20'><path d='M3 3 Q6 1 10 3 L8.5 9 Q5 7.5 1.5 9 Z' fill='#E8502C'/><path d='M11 3.5 Q15 5.5 19 3 L17.5 9 Q14 11 9.5 9.5 Z' fill='#7CC83C'/><path d='M1.2 10.5 Q4.5 8.5 8.2 10.2 L6.8 16 Q3.5 14.5 0 16.5 Z' fill='#3C78E8'/><path d='M9.2 10.8 Q13 12.5 17.2 10.2 L15.8 16 Q12 18.5 7.8 16.8 Z' fill='#F8C820'/></svg>
<div class='t' style="left:35px;top:743px;height:24px;line-height:24px;font:italic bold 18px 'Liberation Sans',sans-serif;letter-spacing:-0.4px;color:#fff;text-shadow:1px 2px 2px #1A4A1A">Start</div>
<div class='a' style='left:109px;top:742px;width:158px;height:23px;border-radius:3px;background:linear-gradient(#5C98F8 0,#3C80F0 3px,#3A7CEE 20px,#3474E4 24px);box-shadow:inset 0 1px 0 rgba(255,255,255,.25)'></div><svg class='a' style='left:118px;top:745px' width='18' height='18' viewBox='0 0 18 18'><path d='M5.5 1.5 H13 L16 4.5 V16.5 H5.5 Z' fill='#fff' stroke='#808080' stroke-width='.8'/><circle cx='7' cy='8.5' r='4.6' fill='none' stroke='#1C5CD8' stroke-width='2.4'/><path d='M3 8.5 H11' stroke='#1C5CD8' stroke-width='1.8'/><path d='M1 6.5 Q6 0 13 3' fill='none' stroke='#F0B020' stroke-width='1.2'/></svg><div class='t' style='left:137px;top:746px;color:#fff;font-size:11px;letter-spacing:0;line-height:14px;height:14px'>Dyrepraten :: Forside…</div>
<div class='a' style='left:269px;top:742px;width:158px;height:23px;border-radius:3px;background:linear-gradient(#5C98F8 0,#3C80F0 3px,#3A7CEE 20px,#3474E4 24px);box-shadow:inset 0 1px 0 rgba(255,255,255,.25)'></div><svg class='a' style='left:279px;top:745px' width='18' height='18' viewBox='0 0 18 18'><ellipse cx='9.5' cy='9' rx='6.5' ry='7.5' fill='#D01818'/><ellipse cx='9.5' cy='9' rx='2.8' ry='5.6' fill='#F4F4F4'/><path d='M1 10 H4' stroke='#808080' stroke-width='1.6'/></svg><div class='t' style='left:297px;top:746px;color:#fff;font-size:11px;letter-spacing:0;line-height:14px;height:14px'>MSN Hotmail - Messa…</div>
<div class='a' style='left:429px;top:742px;width:158px;height:23px;border-radius:3px;background:linear-gradient(#1C4CB8 0,#1E52C4 4px,#1F55C8 24px);box-shadow:inset 1px 1px 2px rgba(0,0,40,.5)'></div><svg class='a' style='left:439px;top:745px' width='16' height='16' viewBox='0 0 16 16'><rect width='16' height='16' fill='url(#fzb)'/><rect x='0' y='13' width='16' height='3' fill='#200008' opacity='.55'/><path d='M3 1 H13.6 V3 H5 V6 H9 L9 5.3 H14 V7.3 L10 12 H14 V14 H7 V12 L11 7.3 H8.6 V8 H5 V14 H3 Z' fill='url(#fzy)'/></svg><div class='t' style='left:457px;top:746px;color:#fff;font-size:11px;letter-spacing:0;line-height:14px;height:14px'>FileZilla - Tilkoblet ftpf…</div>
<div class='a' style='left:1079px;top:738px;width:201px;height:30px;background:linear-gradient(#1060B8 0,#1060B8 1px,#40B0F8 1px,#209CF0 3px,#1296EE 8px,#1296EE 26px,#0C70C8 30px);border-left:1px solid #0C3C90'></div>
<div class='t' style='left:1043px;top:746px;color:#fff;font-size:11px'>NO</div>
<div class='a' style='left:1071px;top:745px;width:18px;height:18px;border-radius:9px;background:radial-gradient(circle at 35% 30%,#7CC4FC,#1C88F0 65%,#1468D8);border:1px solid #A8C8F0'></div>
<svg class='a' style='left:1071px;top:745px' width='18' height='18'><path d='M10.5 5 L6.5 9 L10.5 13' fill='none' stroke='#fff' stroke-width='2.2'/></svg>
<svg class='a' style='left:1090px;top:743px' width='185' height='22' viewBox='0 0 185 22'>
<g><rect x='1' y='5' width='8' height='7' fill='#303880' stroke='#181840'/><rect x='7' y='2' width='8' height='7' fill='#282C70' stroke='#181840'/><rect x='0' y='13' width='10' height='2.5' fill='#D8D8E0' stroke='#606070' stroke-width='.6'/><path d='M7 10 L16 19 M16 10 L7 19' stroke='#E81818' stroke-width='2.4'/></g>
<g transform='translate(18 0)'><rect x='1' y='6' width='8' height='7' fill='#303880' stroke='#181840'/><rect x='6' y='3' width='8' height='7' fill='#282C70' stroke='#181840'/><rect x='0' y='14' width='10' height='2.5' fill='#D8D8E0' stroke='#606070' stroke-width='.6'/><path d='M15 4 Q17 7 15 10 M17.5 2.5 Q20.5 7 17.5 11.5' fill='none' stroke='#E8E8F0' stroke-width='1.2'/></g>
<g transform='translate(36 1)'><circle cx='8.5' cy='9' r='8' fill='#F0C010' stroke='#A87800'/><circle cx='8.5' cy='9' r='5.4' fill='none' stroke='#181818' stroke-width='1.2'/><path d='M3 9 H14 M8.5 3.6 V14.4 M5.6 4.6 Q3.8 9 5.6 13.4 M11.4 4.6 Q13.2 9 11.4 13.4 M4 6.3 H13 M4 11.7 H13' fill='none' stroke='#181818' stroke-width='1'/></g>
<g transform='translate(56 1)'><rect x='1' y='1' width='11' height='16' rx='5' fill='#1838E0' stroke='#0820A0'/><path d='M3.5 5.5 L9.5 11.5 L6.5 14.5 V3.5 L9.5 6.5 L3.5 12.5' fill='none' stroke='#fff' stroke-width='1.3'/></g>
<g transform='translate(72 0)'><path d='M2 2 Q9 3 13 11 L10 14 Q3 10 2 2 Z' fill='#404858' stroke='#202830'/><path d='M4 4 Q8 5 10 9' stroke='#A0A8B8' stroke-width='1.4' fill='none'/><path d='M11 12 L17 20 L14 19 L13 21 Z' fill='#78B8F0' stroke='#3878C0' stroke-width='.6'/></g>
<g transform='translate(90 0)'><circle cx='8' cy='5' r='3.4' fill='#58B058'/><path d='M1 18 Q2 9 8 9 Q14 9 15 18 Z' fill='#48A048'/><circle cx='13.5' cy='8' r='2.4' fill='#4888D8'/><path d='M10 18 Q10.5 12 14 12 Q17 12 17.5 18 Z' fill='#F08828'/></g>
<g transform='translate(108 0)'><circle cx='7.5' cy='8' r='7' fill='#909498' stroke='#505458'/><circle cx='7.5' cy='8' r='3.6' fill='#585C60'/><circle cx='6.5' cy='7' r='1.4' fill='#D0D4D8'/><path d='M10 16 Q15 14 17 9' stroke='#C8D8F0' stroke-width='1.3' fill='none'/></g>
<g transform='translate(128 1)'><path d='M10 1 Q1 6 3 13 Q6 18 11 15 Q15 11 10 8 Q6 8 6 12' fill='none' stroke='#E01010' stroke-width='1.5'/></g>
</svg>
<div class='t' style='left:1240px;top:746px;color:#fff;font-size:11px;letter-spacing:-0.3px'>21:06</div>
<svg class='a' style='left:0;top:70px;pointer-events:none' width='400' height='160' viewBox='0 70 400 160'>
<path d='M200.0 80.9 C208.9 81.2 220.9 82.5 229.0 83.4 C237.1 84.3 242.1 85.2 248.6 86.2 C255.1 87.2 261.5 88.4 268.0 89.7 C274.5 91.0 281.2 92.4 287.7 94.0 C294.2 95.6 300.5 97.2 307.0 99.4 C313.5 101.6 320.8 104.5 326.7 107.2 C332.6 110.0 337.8 112.7 342.3 116.0 C346.9 119.3 350.9 123.4 354.0 126.8 C357.1 130.2 359.3 133.2 360.9 136.5 C362.5 139.8 363.1 143.4 363.4 146.3 C363.7 149.2 363.5 151.5 362.9 154.1 C362.3 156.7 361.4 159.0 359.9 161.9 C358.4 164.8 356.6 168.4 354.0 171.7 C351.4 175.0 348.2 178.4 344.3 181.5 C340.4 184.6 336.2 187.5 330.6 190.2 C325.1 193.0 318.1 195.6 311.0 198.0 C303.9 200.4 295.5 202.9 287.7 204.9 C279.9 206.9 272.3 208.3 264.2 209.8 C256.1 211.3 247.3 212.7 238.8 213.7 C230.3 214.7 219.9 215.2 213.4 215.6 C206.9 216.0 206.3 216.1 200.0 216.1 C193.7 216.1 184.0 215.9 175.8 215.6 C167.6 215.2 158.2 214.7 150.6 214.0 C143.0 213.3 136.7 212.2 130.3 211.3 C124.0 210.4 117.0 209.2 112.5 208.4 C108.0 207.6 106.2 207.3 103.1 206.6 C100.0 205.9 96.9 205.1 93.8 204.2 C90.6 203.3 87.5 202.4 84.4 201.4 C81.3 200.4 78.1 199.3 75.0 198.1 C71.9 196.9 68.7 195.7 65.6 194.4 C62.5 193.1 58.8 191.4 56.2 190.2 C53.8 188.9 52.6 188.2 50.6 186.9 C48.6 185.6 46.2 183.9 44.0 182.2 C41.8 180.5 39.7 178.5 37.5 176.6 C35.3 174.7 32.9 172.8 30.9 170.5 C28.9 168.2 26.9 165.2 25.6 162.5 C24.3 159.8 23.6 156.8 23.0 154.2 C22.4 151.6 22.3 149.0 22.3 146.9 C22.3 144.8 22.3 143.8 23.0 141.7 C23.7 139.6 25.1 137.0 26.7 134.4 C28.3 131.8 30.5 128.7 32.9 126.0 C35.3 123.3 38.1 120.6 41.2 118.2 C44.4 115.8 48.2 113.6 51.7 111.5 C55.2 109.4 58.2 107.6 62.0 105.7 C65.8 103.8 68.6 102.2 74.6 100.2 C80.5 98.2 90.6 95.4 97.7 93.6 C104.8 91.8 110.5 90.6 117.0 89.3 C123.5 88.0 130.2 86.8 136.7 85.8 C143.2 84.8 149.5 84.1 156.0 83.4 C162.5 82.8 168.5 82.3 175.8 81.9 C183.1 81.5 191.1 80.7 200.0 80.9 Z' fill='none' stroke='#F00000' stroke-width='1.25'/></svg>
</body></html>
